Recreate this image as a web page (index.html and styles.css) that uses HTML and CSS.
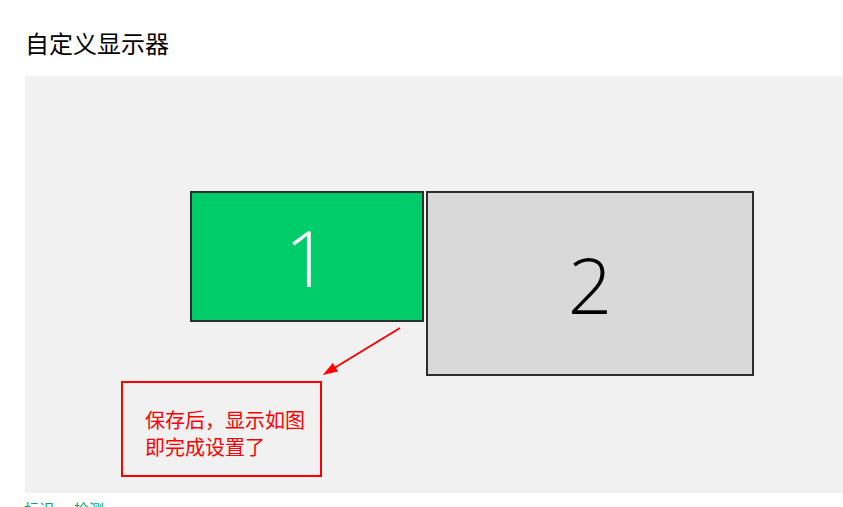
FILE: index.html
```html
<!DOCTYPE html>
<html lang="zh-CN">
<head>
<meta charset="utf-8">
<title>自定义显示器</title>
<link rel="stylesheet" href="styles.css">
</head>
<body>
<h1 class="title">自定义显示器</h1>
<div class="canvas">
  <div class="monitor monitor-1">1</div>
  <div class="monitor monitor-2">2</div>
  <svg class="arrow" width="818" height="417" viewBox="0 0 818 417">
    <line x1="375" y1="252" x2="306" y2="294" stroke="#ff0000" stroke-width="2"/>
    <polygon points="297.7,299 313.1,295.5 307.9,286.9" fill="#ff0000"/>
  </svg>
  <div class="note">保存后，显示如图<br>即完成设置了</div>
</div>
<div class="links">
  <a class="link" href="#">标识</a>
  <a class="link" href="#">检测</a>
</div>
</body>
</html>
```
FILE: styles.css
```css
html, body {
  margin: 0;
  padding: 0;
  background: #ffffff;
  overflow: hidden;
}
body {
  font-family: "Noto Sans CJK SC", "Noto Sans", sans-serif;
  color: #000;
}
.title {
  margin: 0;
  padding: 26px 0 0 25px;
  font-size: 24px;
  line-height: 34px;
  font-weight: 400;
}
.canvas {
  position: relative;
  margin: 16px 0 0 25px;
  height: 417px;
  background: #f1f1f1;
}
.monitor {
  position: absolute;
  box-sizing: border-box;
  border: 2px solid #2e2e2e;
  display: flex;
  align-items: center;
  justify-content: center;
  font-family: "Open Sans", "Noto Sans", sans-serif;
  font-weight: 300;
  font-size: 78px;
  line-height: 1;
}
.monitor-1 {
  left: 165px;
  top: 115px;
  width: 234px;
  height: 131px;
  background: #00cc6a;
  color: #ffffff;
}
.monitor-2 {
  left: 401px;
  top: 115px;
  width: 328px;
  height: 185px;
  background: #d9d9d9;
  color: #000000;
}
.arrow {
  position: absolute;
  left: 0;
  top: 0;
}
.note {
  position: absolute;
  left: 96px;
  top: 305px;
  width: 201px;
  height: 96px;
  box-sizing: border-box;
  border: 2px solid #ff0000;
  padding: 24px 0 0 22px;
  color: #ff0000;
  font-size: 20px;
  line-height: 26.5px;
}
.links {
  display: flex;
  gap: 20px;
  margin: 6px 0 0 24px;
}
.link {
  color: #00a86b;
  text-decoration: none;
  font-size: 15px;
  line-height: 20px;
}
```
